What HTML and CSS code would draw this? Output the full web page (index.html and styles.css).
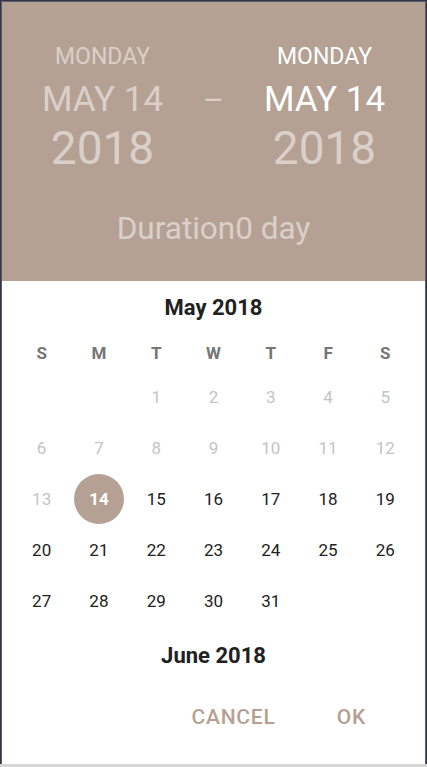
FILE: index.html
```html
<!DOCTYPE html>
<html>
<head>
<meta charset="utf-8">
<link rel="stylesheet" href="styles.css">
</head>
<body>
<div class="dialog">
  <div class="header">
    <div class="range">
      <div class="date">
        <div class="weekday">MONDAY</div>
        <div class="monthday">MAY 14</div>
        <div class="year">2018</div>
      </div>
      <div class="dash">–</div>
      <div class="date active">
        <div class="weekday">MONDAY</div>
        <div class="monthday">MAY 14</div>
        <div class="year">2018</div>
      </div>
    </div>
    <div class="duration">Duration0 day</div>
  </div>
  <div class="body">
    <div class="month-title">May 2018</div>
    <div class="grid weekdays">
      <span>S</span><span>M</span><span>T</span><span>W</span><span>T</span><span>F</span><span>S</span>
    </div>
    <div class="grid days">
      <span></span><span></span>
      <span class="off">1</span><span class="off">2</span><span class="off">3</span><span class="off">4</span><span class="off">5</span>
      <span class="off">6</span><span class="off">7</span><span class="off">8</span><span class="off">9</span><span class="off">10</span><span class="off">11</span><span class="off">12</span>
      <span class="off">13</span><span class="sel"><b>14</b></span><span>15</span><span>16</span><span>17</span><span>18</span><span>19</span>
      <span>20</span><span>21</span><span>22</span><span>23</span><span>24</span><span>25</span><span>26</span>
      <span>27</span><span>28</span><span>29</span><span>30</span><span>31</span>
    </div>
    <div class="month-title next">June 2018</div>
    <div class="actions">
      <span class="btn">CANCEL</span>
      <span class="btn">OK</span>
    </div>
  </div>
</div>
<div class="under"></div>
</body>
</html>
```
FILE: styles.css
```css
html, body {
  margin: 0;
  padding: 0;
  height: 100%;
}
body {
  background: #31344b;
  font-family: Roboto, "Noto Sans", sans-serif;
  overflow: hidden;
}
.dialog {
  margin: 2px 2px 0 2px;
  height: 762px;
  background: #ffffff;
  box-shadow: 0 0 0 1px rgba(120,120,120,0.6);
  display: flex;
  flex-direction: column;
}
.under {
  height: 3px;
  background: #d6d6d6;
}
.header {
  background: #b5a193;
  color: rgba(255,255,255,0.5);
  padding: 43px 0 33px;
  height: 279px;
  box-sizing: border-box;
}
.range {
  display: grid;
  grid-template-columns: 1fr auto 1fr;
  align-items: start;
}
.date {
  display: flex;
  flex-direction: column;
  align-items: center;
}
.weekday {
  font-size: 23px;
  line-height: 24px;
}
.monthday {
  font-size: 35px;
  line-height: 40px;
  margin-top: 11px;
}
.year {
  font-size: 46px;
  line-height: 50px;
  margin-top: 3px;
}
.active .weekday,
.active .monthday {
  color: #ffffff;
}
.dash {
  font-size: 32px;
  line-height: 40px;
  margin-top: 35px;
}
.duration {
  text-align: center;
  font-size: 31.5px;
  line-height: 36px;
  margin-top: 38px;
}
.body {
  padding: 0 11px;
  display: flex;
  flex-direction: column;
}
.month-title {
  text-align: center;
  font-weight: 700;
  font-size: 22px;
  line-height: 24px;
  color: #212121;
  margin-top: 15px;
}
.month-title.next {
  margin-top: 18px;
}
.grid {
  display: grid;
  grid-template-columns: repeat(7, 1fr);
  text-align: center;
}
.weekdays {
  margin-top: 23px;
  font-size: 17px;
  line-height: 20px;
  font-weight: 700;
  color: #757575;
}
.days {
  margin-top: 8px;
  grid-auto-rows: 51px;
  font-size: 17px;
  color: #212121;
}
.days span {
  display: flex;
  align-items: center;
  justify-content: center;
}
.days .off {
  color: #c4c4c4;
}
.days .sel b {
  width: 50px;
  height: 50px;
  border-radius: 50%;
  background: #b5a193;
  color: #ffffff;
  display: flex;
  align-items: center;
  justify-content: center;
  font-weight: 700;
}
.actions {
  display: flex;
  justify-content: flex-end;
  gap: 61px;
  margin-top: 37px;
  padding-right: 48px;
}
.btn {
  font-size: 21px;
  line-height: 24px;
  font-weight: 500;
  color: #b5a193;
  letter-spacing: 0.8px;
}
```
